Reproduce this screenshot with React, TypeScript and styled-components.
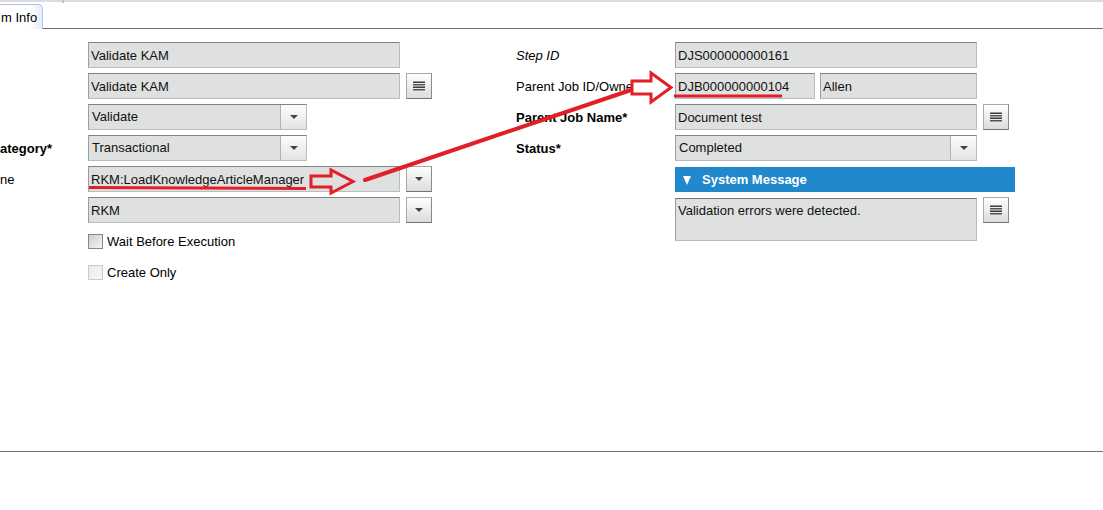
import React from "react";
import styled, { createGlobalStyle, css } from "styled-components";

const GlobalStyle = createGlobalStyle`
  html, body {
    margin: 0;
    padding: 0;
    background: #fff;
  }
  body {
    font-family: "Liberation Sans", Arial, sans-serif;
    font-size: 13px;
    color: #000;
  }
`;

const Page = styled.div`
  position: relative;
  width: 1103px;
  height: 510px;
  overflow: hidden;
  background: #fff;
`;

const TopStrip = styled.div`
  height: 3px;
  background: linear-gradient(#dcdcdc 0, #dcdcdc 2px, #fff 2px);
`;

const StripDivider = styled.div`
  margin-left: 62px;
  width: 2px;
  height: 3px;
  background: #c4c4c4;
`;

const TabBar = styled.div`
  display: flex;
  align-items: flex-end;
  height: 26px;
`;

const Tab = styled.div`
  box-sizing: border-box;
  width: 43px;
  height: 25px;
  padding-left: 1px;
  line-height: 25px;
  border: 1px solid #a9c6e8;
  border-left: none;
  border-bottom: none;
  border-top-right-radius: 5px;
  background: linear-gradient(to right, #fff 70%, #e6eef9);
  white-space: nowrap;
  overflow: hidden;
`;

const TabRest = styled.div`
  flex: 1;
  height: 100%;
  border-bottom: 1px solid #6f6f6f;
`;

const Panel = styled.div`
  box-sizing: border-box;
  display: flex;
  height: 423px;
  padding-top: 13px;
  border-bottom: 1px solid #707070;
`;

const LeftForm = styled.div`
  display: grid;
  grid-template-columns: 82px 312px 26px;
  grid-auto-rows: 26px;
  column-gap: 6px;
  row-gap: 5px;
  align-content: start;
`;

const RightForm = styled.div`
  margin-left: 84px;
  display: grid;
  grid-template-columns: 153px 302px 32px;
  grid-template-rows: repeat(5, 26px) 43px;
  column-gap: 6px;
  row-gap: 5px;
  align-content: start;
`;

const Label = styled.div<{ $bold?: boolean; $italic?: boolean; $maxW?: number }>`
  grid-column: 1;
  display: flex;
  align-items: center;
  white-space: nowrap;
  overflow: hidden;
  font-weight: ${(p) => (p.$bold ? "bold" : "normal")};
  font-style: ${(p) => (p.$italic ? "italic" : "normal")};
  max-width: ${(p) => (p.$maxW ? `${p.$maxW}px` : "none")};
`;

const fieldBox = css`
  box-sizing: border-box;
  height: 26px;
  background: #dfe0e0;
  border: 1px solid #b9bdc1;
  border-top-color: #808487;
  border-left-color: #9a9ea2;
  font-family: "Liberation Sans", Arial, sans-serif;
  font-size: 13px;
  color: #111;
`;

const Field = styled.input<{ $w?: number }>`
  ${fieldBox};
  grid-column: 2;
  width: ${(p) => (p.$w ? `${p.$w}px` : "100%")};
  margin: 0;
  padding: 0 2px;
  outline: none;
`;

const FieldPair = styled.div`
  grid-column: 2;
  display: grid;
  grid-template-columns: 140px 157px;
  column-gap: 5px;

  & > input {
    grid-column: auto;
  }
`;

const Select = styled.div<{ $w?: number }>`
  ${fieldBox};
  grid-column: 2;
  display: flex;
  width: ${(p) => (p.$w ? `${p.$w}px` : "100%")};
`;

const SelectValue = styled.div`
  flex: 1;
  padding-left: 3px;
  line-height: 24px;
  white-space: nowrap;
  overflow: hidden;
`;

const SelectArrow = styled.div`
  width: 25px;
  display: flex;
  align-items: center;
  justify-content: center;
  border-left: 1px solid #b3b3b3;
  background: linear-gradient(#fdfdfd, #e3e3e3);
`;

const Caret = styled.span`
  width: 0;
  height: 0;
  border-left: 4px solid transparent;
  border-right: 4px solid transparent;
  border-top: 4px solid #444;
`;

const ToolButton = styled.button`
  grid-column: 3;
  box-sizing: border-box;
  width: 26px;
  height: 26px;
  margin: 0;
  padding: 0;
  display: flex;
  align-items: center;
  justify-content: center;
  border: 1px solid #a9a9a9;
  border-right-color: #8a8a8a;
  border-bottom-color: #747474;
  background: linear-gradient(#fefefe, #dcdcdc);
`;

const CheckRow = styled.label`
  grid-column: 2;
  display: flex;
  align-items: center;
  gap: 4px;
`;

const CheckBox = styled.span<{ $disabled?: boolean }>`
  box-sizing: border-box;
  width: 15px;
  height: 15px;
  border: 1px solid ${(p) => (p.$disabled ? "#c9c9c9" : "#878787")};
  background: ${(p) =>
    p.$disabled
      ? "linear-gradient(135deg, #e9e9e9, #f8f8f8)"
      : "linear-gradient(135deg, #cfcfcf, #f3f3f3)"};
`;

const SectionHeader = styled.div`
  grid-column: 2 / 4;
  margin-top: 1px;
  height: 25px;
  display: flex;
  align-items: center;
  gap: 11px;
  padding-left: 8px;
  background: #2188cb;
  color: #fff;
  font-weight: bold;
`;

const HeaderCaret = styled.span`
  width: 0;
  height: 0;
  margin-top: 1px;
  border-left: 4.5px solid transparent;
  border-right: 4.5px solid transparent;
  border-top: 9px solid #fff;
`;

const MessageBox = styled.textarea`
  ${fieldBox};
  grid-column: 2;
  height: 43px;
  margin: 1px 0 0;
  padding: 4px 2px;
  border-top-color: #6f7275;
  resize: none;
  overflow: hidden;
  outline: none;
  line-height: 15px;
`;

const Annotations = styled.svg`
  position: absolute;
  top: 0;
  left: 0;
  pointer-events: none;
`;

const LinesIcon = () => (
  <svg width="12" height="10" viewBox="0 0 12 10">
    <rect x="0" y="0.5" width="12" height="1.5" fill="#3c3c3c" />
    <rect x="0" y="3" width="12" height="1.5" fill="#555" />
    <rect x="0" y="5.5" width="12" height="1.5" fill="#3c3c3c" />
    <rect x="0" y="8" width="12" height="1.5" fill="#555" />
  </svg>
);

const RED = "#e21f26";

export default function App() {
  return (
    <>
      <GlobalStyle />
      <Page>
        <TopStrip>
          <StripDivider />
        </TopStrip>
        <TabBar>
          <Tab>m Info</Tab>
          <TabRest />
        </TabBar>
        <Panel>
          <LeftForm>
            <Field $w={312} readOnly value="Validate KAM" />
            <Field $w={312} readOnly value="Validate KAM" />
            <ToolButton>
              <LinesIcon />
            </ToolButton>
            <Select $w={219}>
              <SelectValue>Validate</SelectValue>
              <SelectArrow>
                <Caret />
              </SelectArrow>
            </Select>
            <Label $bold>ategory*</Label>
            <Select $w={219}>
              <SelectValue>Transactional</SelectValue>
              <SelectArrow>
                <Caret />
              </SelectArrow>
            </Select>
            <Label>ne</Label>
            <Field $w={312} readOnly value="RKM:LoadKnowledgeArticleManager" />
            <ToolButton>
              <Caret />
            </ToolButton>
            <Field $w={312} readOnly value="RKM" />
            <ToolButton>
              <Caret />
            </ToolButton>
            <CheckRow>
              <CheckBox />
              Wait Before Execution
            </CheckRow>
            <CheckRow>
              <CheckBox $disabled />
              Create Only
            </CheckRow>
          </LeftForm>

          <RightForm>
            <Label $italic>Step ID</Label>
            <Field readOnly value="DJS000000000161" />
            <Label $maxW={117}>Parent Job ID/Owner</Label>
            <FieldPair>
              <Field readOnly value="DJB000000000104" />
              <Field readOnly value="Allen" />
            </FieldPair>
            <Label $bold>Parent Job Name*</Label>
            <Field readOnly value="Document test" />
            <ToolButton>
              <LinesIcon />
            </ToolButton>
            <Label $bold>Status*</Label>
            <Select>
              <SelectValue>Completed</SelectValue>
              <SelectArrow>
                <Caret />
              </SelectArrow>
            </Select>
            <SectionHeader>
              <HeaderCaret />
              System Message
            </SectionHeader>
            <MessageBox readOnly value="Validation errors were detected." />
            <ToolButton>
              <LinesIcon />
            </ToolButton>
          </RightForm>
        </Panel>

        <Annotations width="1103" height="510" viewBox="0 0 1103 510">
          <path d="M89 187.5 L306 188.5" stroke={RED} strokeWidth="3" fill="none" />
          <polygon
            points="311,176 331,176 331,170 353,181.5 331,193 331,187 311,187"
            stroke={RED}
            strokeWidth="3"
            fill="none"
          />
          <path d="M365 180 L631 90" stroke={RED} strokeWidth="4" strokeLinecap="round" fill="none" />
          <polygon
            points="632,81 651,81 651,73 671,87.5 651,102 651,94 632,94"
            stroke={RED}
            strokeWidth="3"
            fill="none"
          />
          <path d="M674 96 L782 96" stroke={RED} strokeWidth="3" fill="none" />
        </Annotations>
      </Page>
    </>
  );
}
